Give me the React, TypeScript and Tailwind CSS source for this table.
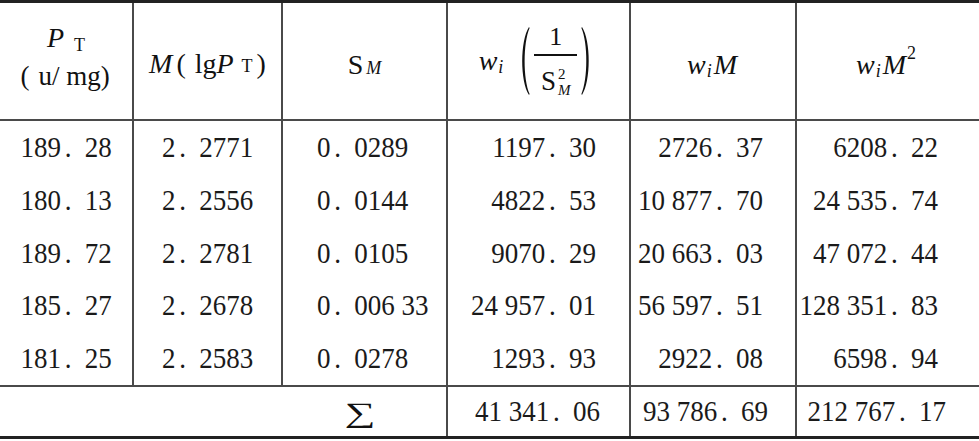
import React from "react"

const rows = [
  ["189.28", "2.2771", "0.0289", "1197.30", "2726.37", "6208.22"],
  ["180.13", "2.2556", "0.0144", "4822.53", "10 877.70", "24 535.74"],
  ["189.72", "2.2781", "0.0105", "9070.29", "20 663.03", "47 072.44"],
  ["185.27", "2.2678", "0.006 33", "24 957.01", "56 597.51", "128 351.83"],
  ["181.25", "2.2583", "0.0278", "1293.93", "2922.08", "6598.94"],
]

const rowHeights = ["h-[53px]", "h-[53px]", "h-[52px]", "h-[53px]", "h-[53px]"]

// number with the wide "． " gap used in the printed table
function Num({ v }: { v: string }) {
  const [a, b] = v.split(".")
  return (
    <span className="inline-block whitespace-pre scale-y-110">
      {a}
      <span className="inline-block w-[0.88em] pl-[0.14em]">.</span>
      {b}
    </span>
  )
}

function Paren({ right = false }: { right?: boolean }) {
  return (
    <svg width="12" height="68" viewBox="0 0 12 68" className={right ? "-scale-x-100" : ""}>
      <path d="M11 0 C 2 14, 2 54, 11 68 L 11.6 67 C 5 52, 5 16, 11.6 1 Z" fill="#111" />
    </svg>
  )
}

const cellAlign = [
  "justify-center",
  "justify-center",
  "justify-start pl-[34px]",
  "justify-end pr-[33px]",
  "justify-end pr-[32px]",
  "justify-end pr-[41px]",
]

export default function App() {
  return (
    <div className="w-[979px] h-[441px] bg-white text-[#111] font-serif">
      <div className="border-t-[3px] border-b-[3px] border-[#222] font-['Liberation_Serif','Times_New_Roman',serif]">
        <div className="grid grid-cols-[132px_149px_165px_183px_166px_184px]">
          {/* header */}
          <div className="h-[118px] border-b-2 border-[#4a4a4a] flex flex-col items-center justify-center">
            <div className="h-[54px] flex items-end pb-[9px] text-[28px] leading-none">
              <i>P</i>
              <span className="text-[18px] ml-[10px] relative top-[2px]">T</span>
            </div>
            <div className="h-[54px] flex items-start pt-[2px] text-[27px] leading-none -translate-x-[1px]">
              <span>(</span>
              <span className="ml-[9px]">u/ mg)</span>
            </div>
          </div>
          <div className="h-[118px] border-b-2 border-l-2 border-[#4a4a4a] flex items-center justify-center text-[28px] leading-none pt-[6px]">
            <i>M</i>
            <span className="ml-[4px]">(</span>
            <span className="ml-[9px]">lg</span>
            <i>P</i>
            <span className="text-[18px] ml-[8px] relative top-[2px]">T</span>
            <span className="ml-[4px]">)</span>
          </div>
          <div className="h-[118px] border-b-2 border-l-2 border-[#4a4a4a] flex items-center justify-center text-[28px] leading-none pt-[8px]">
            <span>S</span>
            <i className="text-[18px] ml-[3px] relative top-[3px]">M</i>
          </div>
          <div className="h-[118px] border-b-2 border-l-2 border-[#4a4a4a] flex items-center justify-center pr-[5px]">
            <i className="text-[28px] leading-none">w</i>
            <i className="text-[18px] leading-none relative top-[6px] ml-[1px]">i</i>
            <span className="ml-[15px] flex items-center">
              <Paren />
              <span className="flex flex-col items-center mx-[4px]">
                <span className="text-[26px] leading-none mb-[4px]">1</span>
                <span className="w-[43px] h-[1.5px] bg-[#111]" />
                <span className="flex items-start mt-[12px] text-[27px] leading-none">
                  <span>S</span>
                  <span className="flex flex-col text-[15px] leading-none ml-[2px] -mt-[1px]">
                    <span>2</span>
                    <i className="mt-[1px]">M</i>
                  </span>
                </span>
              </span>
              <Paren right />
            </span>
          </div>
          <div className="h-[118px] border-b-2 border-l-2 border-[#4a4a4a] flex items-center justify-center text-[28px] leading-none pt-[8px] pr-[2px]">
            <i>w</i>
            <i className="text-[18px] relative top-[6px] ml-[1px]">i</i>
            <i className="ml-[2px]">M</i>
          </div>
          <div className="h-[118px] border-b-2 border-l-2 border-[#4a4a4a] flex items-center justify-center text-[28px] leading-none pt-[8px] pr-[4px]">
            <i>w</i>
            <i className="text-[18px] relative top-[6px] ml-[1px]">i</i>
            <i className="ml-[2px]">M</i>
            <span className="text-[18px] relative -top-[12px] ml-[1px]">2</span>
          </div>

          {/* body */}
          {rows.map((r, ri) =>
            r.map((v, ci) => (
              <div
                key={`${ri}-${ci}`}
                className={`${rowHeights[ri]} flex items-center text-[27px] leading-none text-[#1a1a1a] ${cellAlign[ci]} ${ci > 0 ? "border-l-2 border-[#4a4a4a]" : ""}`}
              >
                <Num v={v} />
              </div>
            ))
          )}

          {/* sum row */}
          <div className="col-span-3 h-[51px] border-t-2 border-[#4a4a4a] flex items-center justify-end pr-[76px] pt-[2px] text-[28px] leading-none">
            <span className="inline-block scale-x-[1.55]">∑</span>
          </div>
          <div className="h-[51px] border-t-2 border-l-2 border-[#4a4a4a] flex items-center justify-end pr-[29px] text-[27px] leading-none text-[#1a1a1a]">
            <Num v="41 341.06" />
          </div>
          <div className="h-[51px] border-t-2 border-l-2 border-[#4a4a4a] flex items-center justify-end pr-[27px] text-[27px] leading-none text-[#1a1a1a]">
            <Num v="93 786.69" />
          </div>
          <div className="h-[51px] border-t-2 border-l-2 border-[#4a4a4a] flex items-center justify-end pr-[33px] text-[27px] leading-none text-[#1a1a1a]">
            <Num v="212 767.17" />
          </div>
        </div>
      </div>
    </div>
  )
}
